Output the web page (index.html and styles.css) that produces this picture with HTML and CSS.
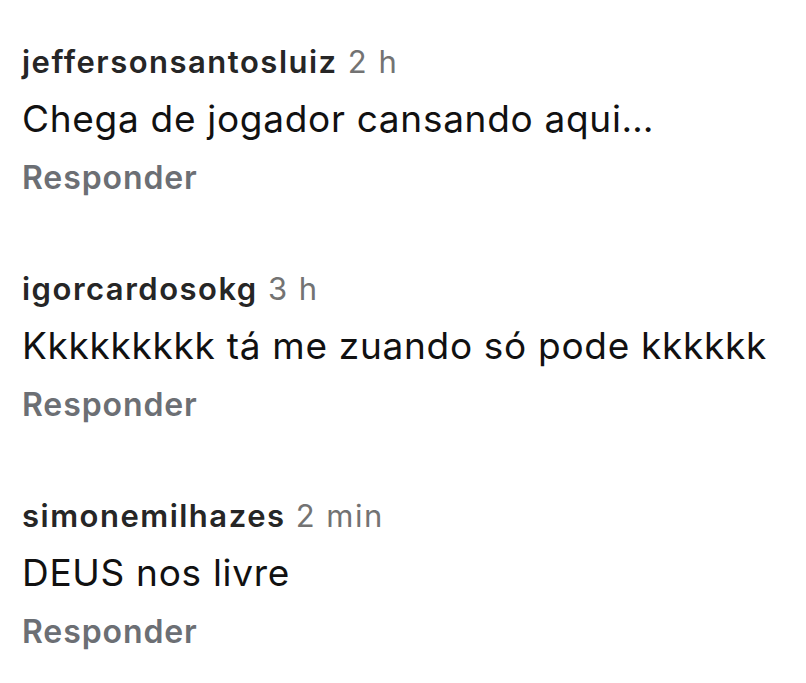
FILE: index.html
```html
<!DOCTYPE html>
<html lang="pt">
<head>
  <meta charset="UTF-8">
  <meta name="viewport" content="width=device-width, initial-scale=1.0">
  <title>Comentários</title>
  <link rel="stylesheet" href="styles.css">
</head>
<body>
  <div class="comments">
    <div class="comment">
      <div class="meta"><span class="user">jeffersonsantosluiz</span> <span class="time">2 h</span></div>
      <div class="text">Chega de jogador cansando aqui…</div>
      <div class="reply">Responder</div>
    </div>
    <div class="comment">
      <div class="meta"><span class="user">igorcardosokg</span> <span class="time">3 h</span></div>
      <div class="text">Kkkkkkkkk tá me zuando só pode kkkkkk</div>
      <div class="reply">Responder</div>
    </div>
    <div class="comment">
      <div class="meta"><span class="user">simonemilhazes</span> <span class="time">2 min</span></div>
      <div class="text">DEUS nos livre</div>
      <div class="reply">Responder</div>
    </div>
  </div>
</body>
</html>
```

FILE: styles.css
```css
body { font-family: Inter, "Noto Sans", sans-serif; background: #fff; margin: 0; }
.comments { display: flex; flex-direction: column; gap: 71px; padding: 42px 22px 0; }
.meta { font-size: 31px; line-height: 40px; letter-spacing: 1.5px; }
.user { font-weight: 600; color: #262626; }
.time { color: #737373; }
.text { font-size: 37px; line-height: 48px; margin-top: 13px; color: #111; letter-spacing: 0.7px; }
.reply { font-size: 32px; line-height: 40px; margin-top: 15px; font-weight: 600; color: #6c6f74; letter-spacing: 0.9px; }
```
